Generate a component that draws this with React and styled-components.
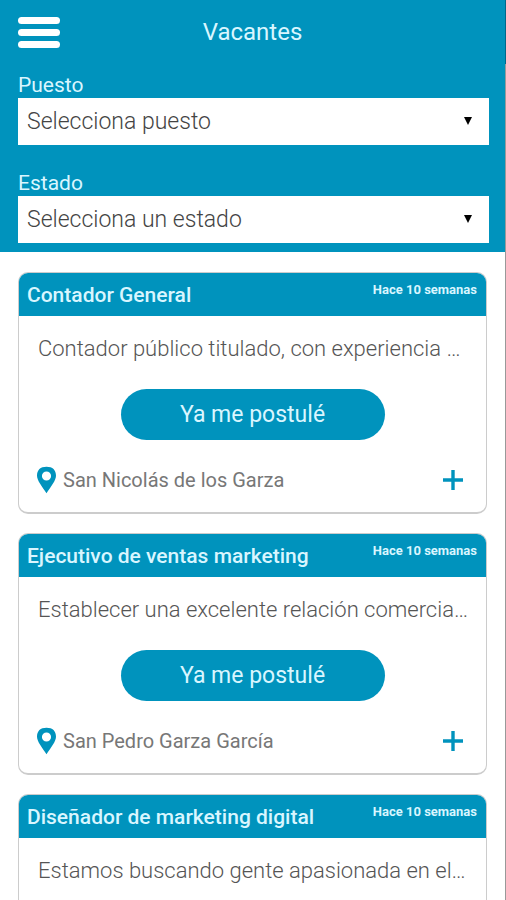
import React, { useState } from "react";
import styled, { createGlobalStyle } from "styled-components";

const BLUE = "#0093bd";

const vacancies = [
  {
    id: 1,
    title: "Contador General",
    date: "Hace 10 semanas",
    description: "Contador público titulado, con experiencia …",
    city: "San Nicolás de los Garza"
  },
  {
    id: 2,
    title: "Ejecutivo de ventas marketing",
    date: "Hace 10 semanas",
    description: "Establecer una excelente relación comercia…",
    city: "San Pedro Garza García"
  },
  {
    id: 3,
    title: "Diseñador de marketing digital",
    date: "Hace 10 semanas",
    description: "Estamos buscando gente apasionada en el…",
    city: "Monterrey"
  }
];

const Filter = ({ id, label, placeholder }) => {
  const [value, setValue] = useState("");
  return (
    <Field>
      <Label htmlFor={id}>{label}</Label>
      <SelectBox>
        <Select id={id} value={value} onChange={e => setValue(e.target.value)}>
          <option value="">{placeholder}</option>
        </Select>
        <Arrow viewBox="0 0 8 8" aria-hidden="true">
          <path d="M0 0h8L4 8z" />
        </Arrow>
      </SelectBox>
    </Field>
  );
};

const Vacancy = ({ title, date, description, city }) => (
  <Card>
    <CardHeader>
      <CardTitle>{title}</CardTitle>
      <CardDate>{date}</CardDate>
    </CardHeader>
    <CardBody>
      <Description>{description}</Description>
      <ApplyButton type="button">Ya me postulé</ApplyButton>
      <CardFooter>
        <Pin viewBox="0 0 20 28" aria-hidden="true">
          <path
            fillRule="evenodd"
            d="M10 0C3.500 0 0 3.500 0 9.500C0 14.500 5.500 21 10 28C14.500 21 20 14.500 20 9.500C20 3.500 16.500 0 10 0zM10 5a4.800 4.800 0 1 1 0 9.600a4.800 4.800 0 0 1 0-9.600z"
          />
        </Pin>
        <City>{city}</City>
        <MoreButton type="button" aria-label="Ver más">
          <svg width="20" height="20" viewBox="0 0 20 20">
            <path d="M10 0v20M0 10h20" stroke={BLUE} strokeWidth="3.400" />
          </svg>
        </MoreButton>
      </CardFooter>
    </CardBody>
  </Card>
);

const App = () => (
  <Page>
    <GlobalStyle />
    <TopBar>
      <MenuButton type="button" aria-label="Menú">
        <MenuLine />
        <MenuLine />
        <MenuLine />
      </MenuButton>
      <Title>Vacantes</Title>
    </TopBar>
    <Content>
      <Filters>
        <Filter id="puesto" label="Puesto" placeholder="Selecciona puesto" />
        <Filter id="estado" label="Estado" placeholder="Selecciona un estado" />
      </Filters>
      <List>
        {vacancies.map(vacancy => (
          <Vacancy key={vacancy.id} {...vacancy} />
        ))}
      </List>
    </Content>
  </Page>
);

const GlobalStyle = createGlobalStyle`
  * {
    box-sizing: border-box;
  }
  body {
    margin: 0;
    background: #fff;
    font-family: Roboto, "Liberation Sans", sans-serif;
  }
  button, select {
    font-family: inherit;
  }
`;

const Page = styled.div`
  display: flex;
  flex-direction: column;
  height: 100vh;
`;

const TopBar = styled.header`
  display: grid;
  grid-template-columns: 42px 1fr 42px;
  align-items: center;
  flex-shrink: 0;
  height: 64px;
  padding: 0 18px;
  background: ${BLUE};
  border-right: 1px solid #00688a;
`;

const MenuButton = styled.button`
  display: flex;
  flex-direction: column;
  gap: 5px;
  padding: 0;
  border: 0;
  background: none;
  cursor: pointer;
`;

const MenuLine = styled.span`
  width: 42px;
  height: 7px;
  border-radius: 4px;
  background: #fff;
`;

const Title = styled.h1`
  margin: 0;
  font-size: 24px;
  font-weight: 400;
  line-height: 28px;
  text-align: center;
  color: #d9f6ff;
`;

const Content = styled.main`
  flex: 1;
  min-height: 0;
  overflow-y: auto;
  scrollbar-width: none;
  border-right: 1px solid #999;
`;

const Filters = styled.form`
  display: flex;
  flex-direction: column;
  gap: 25px;
  padding: 8px 16px 9px 18px;
  background: ${BLUE};
`;

const Field = styled.div`
  display: flex;
  flex-direction: column;
`;

const Label = styled.label`
  font-size: 21px;
  line-height: 26px;
  color: #d9f6ff;
`;

const SelectBox = styled.div`
  position: relative;
`;

const Select = styled.select`
  display: block;
  width: 100%;
  height: 47px;
  padding: 0 40px 0 9px;
  border: 0;
  border-radius: 0;
  appearance: none;
  background: #fff;
  font-size: 23px;
  font-weight: 300;
  color: #444;
`;

const Arrow = styled.svg`
  position: absolute;
  top: 19px;
  right: 17px;
  width: 8px;
  height: 8px;
  pointer-events: none;
`;

const List = styled.section`
  display: flex;
  flex-direction: column;
  gap: 19px;
  padding: 20px 18px;
`;

const Card = styled.article`
  border: 1px solid #ccc;
  border-bottom-width: 2px;
  border-radius: 10px;
  overflow: hidden;
`;

const CardHeader = styled.header`
  display: flex;
  justify-content: space-between;
  height: 43px;
  padding: 8px 9px 0 8px;
  background: ${BLUE};
`;

const CardTitle = styled.h2`
  margin: 0;
  font-size: 21px;
  font-weight: 500;
  line-height: 28px;
  color: #d9f6ff;
`;

const CardDate = styled.span`
  font-size: 13px;
  font-weight: 700;
  line-height: 18px;
  color: #d9f6ff;
`;

const CardBody = styled.div`
  display: flex;
  flex-direction: column;
  padding: 19px 18px 18px;
`;

const Description = styled.p`
  margin: 0 0 26px;
  padding-left: 1px;
  font-size: 22px;
  font-weight: 300;
  line-height: 28px;
  white-space: nowrap;
  color: #555;
`;

const ApplyButton = styled.button`
  align-self: center;
  width: 264px;
  height: 51px;
  border: 0;
  border-radius: 26px;
  background: ${BLUE};
  font-size: 23px;
  color: #d9f6ff;
  cursor: pointer;
`;

const CardFooter = styled.footer`
  display: flex;
  align-items: center;
  gap: 7px;
  margin-top: 26px;
  padding: 0 5px 0 0;
`;

const Pin = styled.svg`
  width: 19px;
  height: 28px;
  fill: ${BLUE};
`;

const City = styled.span`
  flex: 1;
  font-size: 20px;
  line-height: 28px;
  color: #777;
`;

const MoreButton = styled.button`
  display: flex;
  padding: 0;
  border: 0;
  background: none;
  cursor: pointer;
`;

export default App;
